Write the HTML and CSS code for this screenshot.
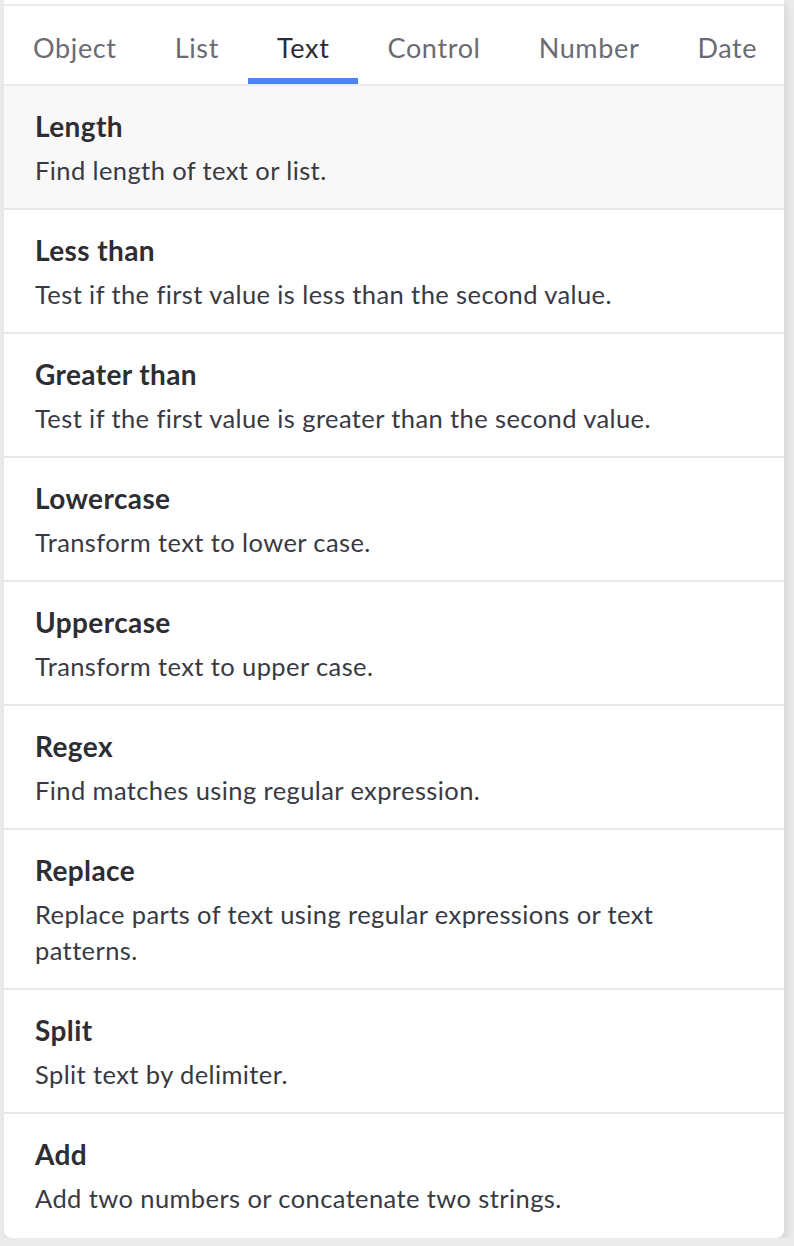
FILE: index.html
```html
<!DOCTYPE html>
<html lang="en">
<head>
<meta charset="utf-8">
<title>Functions</title>
<link rel="stylesheet" href="styles.css">
</head>
<body>
<div class="panel">
  <nav class="tabs">
    <div class="tab">Object</div>
    <div class="tab">List</div>
    <div class="tab active">Text</div>
    <div class="tab">Control</div>
    <div class="tab">Number</div>
    <div class="tab">Date</div>
  </nav>
  <ul class="items">
    <li class="item hover">
      <div class="title">Length</div>
      <div class="desc">Find length of text or list.</div>
    </li>
    <li class="item">
      <div class="title">Less than</div>
      <div class="desc">Test if the first value is less than the second value.</div>
    </li>
    <li class="item">
      <div class="title">Greater than</div>
      <div class="desc">Test if the first value is greater than the second value.</div>
    </li>
    <li class="item">
      <div class="title">Lowercase</div>
      <div class="desc">Transform text to lower case.</div>
    </li>
    <li class="item">
      <div class="title">Uppercase</div>
      <div class="desc">Transform text to upper case.</div>
    </li>
    <li class="item">
      <div class="title">Regex</div>
      <div class="desc">Find matches using regular expression.</div>
    </li>
    <li class="item">
      <div class="title">Replace</div>
      <div class="desc">Replace parts of text using regular expressions or text patterns.</div>
    </li>
    <li class="item">
      <div class="title">Split</div>
      <div class="desc">Split text by delimiter.</div>
    </li>
    <li class="item last">
      <div class="title">Add</div>
      <div class="desc">Add two numbers or concatenate two strings.</div>
    </li>
  </ul>
</div>
</body>
</html>
```
FILE: styles.css
```css
* { box-sizing: border-box; }
html, body {
  margin: 0;
  padding: 0;
  background: #ebebeb;
}
body {
  font-family: Lato, "Open Sans", sans-serif;
  color: #2f2f36;
}
.panel {
  margin: 0 10px 0 4px;
  width: 780px;
  background: #ffffff;
  padding-top: 4px;
  border-radius: 0 0 8px 8px;
  box-shadow: 3px 4px 8px rgba(0, 0, 0, 0.09);
}
.tabs {
  display: flex;
  border-top: 2px solid #ebebeb;
  border-bottom: 2px solid #ececec;
}
.tab {
  height: 78px;
  padding: 10px 29px 0;
  display: flex;
  align-items: center;
  font-size: 27px;
  letter-spacing: 0.65px;
  color: #6b6b74;
  border-bottom: 6px solid transparent;
}
.tab.active {
  color: #2b2b33;
  border-bottom-color: #4a86ef;
}
.items {
  list-style: none;
  margin: 0;
  padding: 0;
}
.item {
  padding: 22px 30px 20px 31px;
  border-bottom: 2px solid #e8e8e8;
  line-height: 36px;
}
.item.last {
  border-bottom: none;
  padding-bottom: 22px;
}
.item.hover {
  background: #f8f8f8;
}
.title {
  font-size: 28px;
  letter-spacing: 0.4px;
  font-weight: 700;
  color: #2d2d33;
  margin-bottom: 8px;
}
.desc {
  font-size: 25.5px;
  letter-spacing: 0.4px;
  color: #393943;
}
```
